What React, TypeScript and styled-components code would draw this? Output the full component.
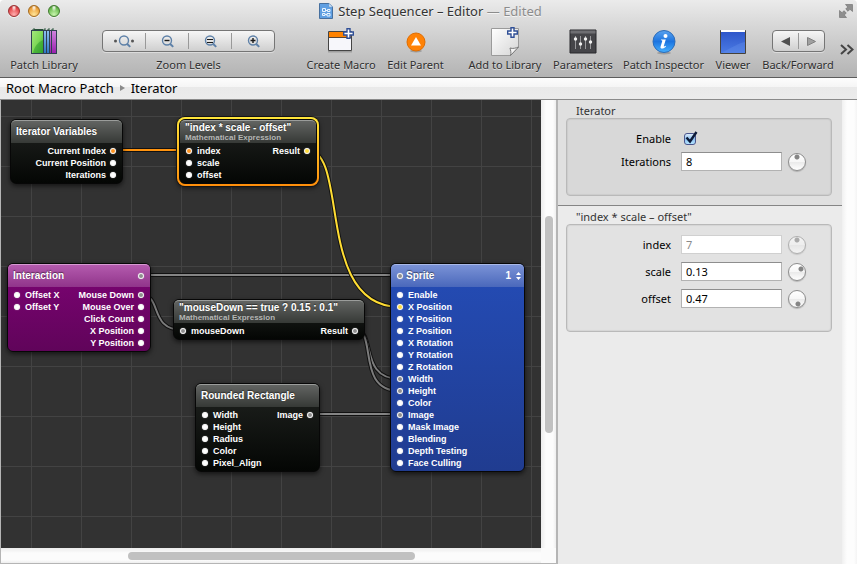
import React, { useId } from "react";
import styled, { createGlobalStyle, css } from "styled-components";

const ui = `"Noto Sans", "Open Sans", sans-serif`;
const patchFont = `"Liberation Sans", Arial, sans-serif`;

const GlobalStyle = createGlobalStyle`
  *, *::before, *::after { box-sizing: border-box; }
  body { margin: 0; background: #fff; font-family: ${ui}; color: #000; }
  button, input { font: inherit; color: inherit; margin: 0; padding: 0; }
`;

/* ---------- window chrome ---------- */

const Window = styled.div`
  display: flex;
  flex-direction: column;
  min-height: 100vh;
`;

const Chrome = styled.header`
  display: flex;
  flex-direction: column;
  background: linear-gradient(#ebebeb 0, #dadada 22px, #b3b3b3 100%);
  border-bottom: 1px solid #5c5c5c;
  border-radius: 4px 4px 0 0;
`;

const TitleBar = styled.div`
  display: grid;
  grid-template-columns: 1fr auto 1fr;
  align-items: center;
  height: 22px;
  padding: 0 4px 0 8px;
`;

const Lights = styled.div`
  display: flex;
  gap: 8px;
`;

const Light = styled.button<{ $dark: string; $mid: string; $pale: string }>`
  width: 12px;
  height: 12px;
  border: 1px solid ${(p) => p.$dark};
  border-radius: 50%;
  background: radial-gradient(ellipse at 50% 15%, #fff 0, transparent 35%),
    radial-gradient(circle at 50% 85%, ${(p) => p.$pale} 0, ${(p) => p.$mid} 65%, ${(p) => p.$dark} 100%);
  box-shadow: 0 1px 0 #f2f2f2;
`;

const Title = styled.h1`
  display: flex;
  align-items: center;
  gap: 5px;
  margin: 0;
  font-size: 13px;
  line-height: 20px;
  font-weight: 400;
  white-space: pre;
  color: #333;
  text-shadow: 0 1px 0 #f4f4f4;
`;

const Faded = styled.span`
  color: #8c8c8c;
`;

const PlainButton = styled.button`
  display: flex;
  border: 0;
  background: none;
`;

const CornerButton = styled(PlainButton)`
  justify-self: end;
`;

const Toolbar = styled.div`
  display: flex;
  gap: 9px;
  height: 55px;
  padding: 0 3px 0 9px;
`;

const ToolItem = styled.div<{ $width: number }>`
  display: flex;
  flex-direction: column;
  align-items: center;
  flex: none;
  width: ${(p) => p.$width}px;
`;

const ToolButton = styled.button<{ $width: number }>`
  display: flex;
  flex-direction: column;
  align-items: center;
  flex: none;
  width: ${(p) => p.$width}px;
  border: 0;
  background: none;
`;

const ToolPicture = styled.span`
  display: flex;
  align-items: center;
  justify-content: center;
  height: 35px;
  padding-top: 5px;
`;

const ToolLabel = styled.span`
  font-size: 11px;
  line-height: 16px;
  white-space: nowrap;
  color: #2e2e2e;
  text-shadow: 0 1px 0 #dedede;
`;

const Space = styled.span<{ $size: number }>`
  flex: none;
  width: ${(p) => p.$size}px;
  margin-right: -9px;
`;

const Segments = styled.div<{ $width: number }>`
  display: flex;
  align-items: center;
  width: ${(p) => p.$width}px;
  height: 22px;
  margin: 8px 0 5px;
  border: 1px solid #757575;
  border-radius: 4px;
  background: linear-gradient(#f6f6f6, #cfcfcf);
  box-shadow: 0 1px 0 #dcdcdc;
`;

const Segment = styled.button`
  display: flex;
  flex: 1;
  align-items: center;
  justify-content: center;
  height: 16px;
  border: 0;
  background: none;
  & + & { border-left: 1px solid #999; }
`;

const More = styled(PlainButton)`
  flex: 1;
  align-self: flex-start;
  justify-content: flex-end;
  margin: 22px 0 0 -5px;
`;

const Crumbs = styled.nav`
  display: flex;
  align-items: center;
  gap: 6px;
  height: 22px;
  padding: 0 6px 2px;
  background: linear-gradient(#fdfdfd 0, #f5f5f5 9px, #e9e9e9 9px, #ebebeb 100%);
  border-bottom: 1px solid #8a8a8a;
  font-size: 13px;
  line-height: 18px;
`;

const Crumb = styled.a`
  color: #000;
  text-decoration: none;
`;

/* ---------- work area ---------- */

const WorkArea = styled.main`
  display: flex;
  flex: 1;
`;

const Editor = styled.section`
  display: grid;
  grid-template: 1fr 15px / 1fr 15px;
  flex: 1;
  border: solid #b5b5b5;
  border-width: 0 2px 1px 1px;
  background: #fbfbfb;
`;

const Canvas = styled.div`
  position: relative;
  isolation: isolate;
  overflow: hidden;
  min-height: 400px;
  background: linear-gradient(90deg, #434343 1px, transparent 1px) 30px 0 / 50px 50px,
    linear-gradient(#434343 1px, transparent 1px) 0 16px / 50px 50px, #323232;
`;

const Wires = styled.svg`
  position: absolute;
  z-index: -2;
  left: 0;
  top: 0;
  width: 100%;
  height: 100%;
`;

const VTrack = styled.div`
  display: grid;
  grid-template-rows: 116fr 217fr 115fr;
  padding: 0 3px 0 4px;
  background: linear-gradient(90deg, #ececec, #fcfcfc 5px, #fcfcfc 12px, #eee);
`;

const HTrack = styled.div`
  display: grid;
  grid-template-columns: 127fr 287fr 126fr;
  padding: 4px 0 3px;
  background: linear-gradient(#ececec, #fcfcfc 5px, #fcfcfc 12px, #eee);
`;

const VThumb = styled.span`
  grid-row: 2;
  border-radius: 4px;
  background: #c1c1c1;
`;

const HThumb = styled.span`
  grid-column: 2;
  border-radius: 4px;
  background: #c1c1c1;
`;

/* ---------- patches ---------- */

type Tone = "black" | "purple" | "blue";

const tones: Record<Tone, { edge: string; head: string; body: string }> = {
  black: {
    edge: "#9b9d9b",
    head: "linear-gradient(#626462, #363936)",
    body: "linear-gradient(#202320, #040604)",
  },
  purple: {
    edge: "#d79ad2",
    head: "linear-gradient(#b45bae, #90348a)",
    body: "linear-gradient(#7d0374, #60045a)",
  },
  blue: {
    edge: "#a9b9e8",
    head: "linear-gradient(#7a92d6, #4a68bb)",
    body: "linear-gradient(#244cb6, #203c90)",
  },
};

const PatchBox = styled.article<{ $x: number; $y: number; $w: number; $tone: Tone; $selected?: boolean }>`
  position: absolute;
  left: ${(p) => p.$x}px;
  top: ${(p) => p.$y}px;
  width: ${(p) => p.$w}px;
  border: 1px solid #070707;
  border-radius: 6px;
  background: ${(p) => tones[p.$tone].body};
  box-shadow: 0 2px 5px rgba(0, 0, 0, 0.6);
  color: #fff;
  font-family: ${patchFont};
  font-weight: 700;
  ${(p) =>
    p.$selected &&
    css`
      box-shadow: none;
      &::before {
        content: "";
        position: absolute;
        z-index: -1;
        inset: -3px;
        border-radius: 8px;
        background: linear-gradient(#ffe63a, #ff8e0a);
        box-shadow: 0 0 0 1px #151515, 0 2px 5px rgba(0, 0, 0, 0.6);
      }
    `}
`;

const PatchHead = styled.header<{ $tone: Tone; $port?: boolean }>`
  display: flex;
  align-items: center;
  gap: 3px;
  height: 23px;
  padding: 0 6px 0 ${(p) => (p.$port ? 6 : 5)}px;
  border-top: 1px solid ${(p) => tones[p.$tone].edge};
  border-radius: 5px 5px 0 0;
  background: ${(p) => tones[p.$tone].head};
`;

const PatchNames = styled.div`
  display: flex;
  flex: 1;
  flex-direction: column;
  white-space: nowrap;
`;

const PatchName = styled.h2`
  margin: 0;
  font-size: 10px;
  line-height: 10px;
  text-shadow: 0 -1px 1px rgba(0, 0, 0, 0.5);
`;

const PatchKind = styled.span`
  font-size: 8px;
  line-height: 9px;
  color: #b4b6b4;
`;

const LayerButton = styled.button`
  display: flex;
  align-items: center;
  gap: 5px;
  margin-right: -3px;
  border: 0;
  background: none;
  font-size: 10px;
  line-height: 10px;
`;

const PatchBody = styled.div`
  display: flex;
  justify-content: space-between;
  padding: 2px 6px;
`;

const PortList = styled.ul`
  margin: 0;
  padding: 0;
  list-style: none;
`;

const PortRow = styled.li<{ $out?: boolean }>`
  display: flex;
  flex-direction: ${(p) => (p.$out ? "row-reverse" : "row")};
  align-items: center;
  gap: ${(p) => (p.$out ? 4 : 5)}px;
  font-size: 9px;
  line-height: 12px;
  white-space: nowrap;
`;

const Dot = styled.span<{ $fill?: string }>`
  flex: none;
  width: 6px;
  height: 6px;
  border: 1px solid #f6f6f6;
  border-radius: 50%;
  background: ${(p) => p.$fill ?? "#fff"};
  box-shadow: 0 0 1px rgba(255, 255, 255, 0.8);
`;

const ORANGE = "#ff9420";
const YELLOW = "#ffdc3c";
const GREY = "#8e8e8e";

type Port = string | [string, string];

interface PatchProps {
  x: number;
  y: number;
  w: number;
  tone?: Tone;
  name: string;
  kind?: string;
  inputs?: Port[];
  outputs?: Port[];
  headIn?: boolean;
  headOut?: boolean;
  layer?: string;
  selected?: boolean;
}

function Ports({ ports, out }: { ports: Port[]; out?: boolean }) {
  return (
    <PortList>
      {ports.map((port) => {
        const [label, fill] = typeof port === "string" ? [port, undefined] : port;
        return (
          <PortRow key={label} $out={out}>
            <Dot $fill={fill} />
            <span>{label}</span>
          </PortRow>
        );
      })}
    </PortList>
  );
}

function Patch({ x, y, w, tone = "black", name, kind, inputs = [], outputs = [], headIn, headOut, layer, selected }: PatchProps) {
  return (
    <PatchBox $x={x} $y={y} $w={w} $tone={tone} $selected={selected}>
      <PatchHead $tone={tone} $port={headIn}>
        {headIn && <Dot $fill={GREY} />}
        <PatchNames>
          <PatchName>{name}</PatchName>
          {kind && <PatchKind>{kind}</PatchKind>}
        </PatchNames>
        {headOut && <Dot $fill={GREY} />}
        {layer && (
          <LayerButton>
            {layer}
            <svg width="5" height="8" viewBox="0 0 5 8" fill="#fff" aria-hidden="true">
              <path d="M2.5 0L5 3H0zM2.5 8L5 5H0z" />
            </svg>
          </LayerButton>
        )}
      </PatchHead>
      <PatchBody>
        <Ports ports={inputs} />
        <Ports ports={outputs} out />
      </PatchBody>
    </PatchBox>
  );
}

const wires = [
  { d: "M140 175H399", color: "#858585" },
  { d: "M309 314H399", color: "#858585" },
  { d: "M140 195C162 195 147 230 182 230", color: "#7c7c7c" },
  { d: "M354 230C376 230 357 279 399 279", color: "#7c7c7c" },
  { d: "M354 230C377 230 354 291 399 291", color: "#7c7c7c" },
  { d: "M112 50H188", color: "#ff930f" },
  { d: "M306 50C349 50 313 207 399 207", color: "#ffdd33" },
];

/* ---------- inspector ---------- */

const Inspector = styled.aside`
  display: flex;
  flex: none;
  width: 299px;
`;

const Panels = styled.div`
  display: flex;
  flex: 1;
  flex-direction: column;
  background: #ebebeb;
`;

const Gutter = styled.div`
  width: 15px;
  background: linear-gradient(90deg, #f0f0f0, #fdfdfd 5px, #fdfdfd 12px, #f4f4f4);
`;

const Panel = styled.section<{ $active?: boolean }>`
  padding: 3px 10px 9px 8px;
  ${(p) =>
    p.$active &&
    css`
      background: #e0e0e0;
      border-bottom: 1px solid #858585;
    `}
`;

const PanelTitle = styled.h2`
  margin: 0 10px;
  font-size: 11px;
  line-height: 15px;
  font-weight: 400;
  color: #333;
`;

const Fields = styled.div<{ $gap: number; $fill: string; $bottom: number }>`
  display: flex;
  flex-direction: column;
  gap: ${(p) => p.$gap}px;
  padding: 10px 25px ${(p) => p.$bottom}px 9px;
  border: 1px solid #b9b9b9;
  border-radius: 4px;
  background: ${(p) => p.$fill};
  box-shadow: inset 0 0 1px 1px rgba(0, 0, 0, 0.06);
`;

const Field = styled.div`
  display: grid;
  grid-template-columns: 1fr 101px 18px;
  align-items: center;
  column-gap: 6px;
  height: 19px;
`;

const FieldLabel = styled.label`
  margin-right: 4px;
  text-align: right;
  font-size: 11px;
  line-height: 19px;
`;

const TextBox = styled.input`
  width: 100%;
  height: 19px;
  padding: 0 4px;
  border: 1px solid #b2b2b2;
  border-top-color: #8e8e8e;
  border-radius: 0;
  background: #fff;
  font-size: 11px;
  &:disabled {
    border-color: #d0d0d0;
    color: #8a8a8a;
    background: #fff;
  }
`;

const Knob = styled.input<{ $dx: number; $dy: number }>`
  appearance: none;
  width: 18px;
  height: 18px;
  border: 1px solid #8d8d8d;
  border-radius: 50%;
  background: radial-gradient(circle at ${(p) => p.$dx}px ${(p) => p.$dy}px, #858585 2px, transparent 3px),
    linear-gradient(#fff 0, #f6f6f6 50%, #e9e9e9 50%, #fff 100%);
  box-shadow: 0 1px 1px rgba(0, 0, 0, 0.2);
  &::-webkit-slider-thumb { appearance: none; width: 0; height: 0; }
  &:disabled { opacity: 0.6; }
`;

const TickWrap = styled.span`
  position: relative;
  display: flex;
  padding-left: 3px;
`;

const TickBox = styled.input`
  appearance: none;
  width: 12px;
  height: 12px;
  border: 1px solid #4a568e;
  border-radius: 3px;
  background: linear-gradient(#dcebfa, #8dc0ef 50%, #b4e4ff);
`;

const Tick = styled.svg`
  position: absolute;
  left: 4px;
  top: -2px;
  pointer-events: none;
  display: none;
  ${TickBox}:checked + & { display: block; }
`;

interface NumberFieldProps {
  label: string;
  value: string;
  dx: number;
  dy: number;
  disabled?: boolean;
}

function NumberField({ label, value, dx, dy, disabled }: NumberFieldProps) {
  const id = useId();
  return (
    <Field>
      <FieldLabel htmlFor={id}>{label}</FieldLabel>
      <TextBox id={id} type="text" defaultValue={value} disabled={disabled} />
      <Knob type="range" min="0" max="10" step="0.01" defaultValue={value} aria-label={`${label} dial`} disabled={disabled} $dx={dx} $dy={dy} />
    </Field>
  );
}

/* ---------- icons ---------- */

function DocumentIcon() {
  return (
    <svg width="14" height="16" viewBox="0 0 14 16" aria-hidden="true">
      <path d="M.5.5H10L13.5 4v11.5H.5z" fill="#5f9fe2" stroke="#47709f" />
      <path d="M10 .5V4h3.5z" fill="#e4f1ff" stroke="#6f9ccb" strokeWidth=".6" />
      <g fill="none" stroke="#e8f4ff">
        <path d="M3.500 5.500h3v3h-3zM8.500 6.500h2.500v2h-2.500zM3.500 10.500h2.500v2h-2.500zM8 10.500h3v2.500H8zM6.500 7.500h2M6 11.500h2" />
      </g>
    </svg>
  );
}

function LibraryIcon() {
  return (
    <svg width="28" height="28" viewBox="0 1 28 28" aria-hidden="true">
      <defs>
        <linearGradient id="lib-g" x2="1" y2="1"><stop stopColor="#a4e57c" /><stop offset=".5" stopColor="#7ed957" /><stop offset="1" stopColor="#35a82b" /></linearGradient>
        <linearGradient id="lib-b" x2="0" y2="1"><stop stopColor="#8cc0f0" /><stop offset="1" stopColor="#2d76c4" /></linearGradient>
        <linearGradient id="lib-p" x2="0" y2="1"><stop stopColor="#cf83dd" /><stop offset="1" stopColor="#9a1fae" /></linearGradient>
      </defs>
      <path d="M2 3.500l2-2v2M13 3.500l2-2v2M17 3.500l2-2v2M21 3.500l2-2v2M4 2.500h9" stroke="#275038" fill="none" />
      <path d="M1 3h26v24H1z" fill="#2f4050" />
      <path d="M2 4h11v22H2z" fill="url(#lib-g)" />
      <path d="M13 13v13H3c1-6 5-11 10-13z" fill="#2f9f2b" opacity=".55" />
      <path d="M14 4h2v22h-2zM17 4h2v22h-2z" fill="url(#lib-b)" />
      <path d="M20 4h1v22h-1zM22 4h4v22h-4z" fill="url(#lib-p)" />
    </svg>
  );
}

type Sign = "fit" | "minus" | "equal" | "plus";

const signs: Record<Sign, string> = {
  fit: "",
  minus: "M7.500 5.500h5",
  equal: "M7 4.500h6M7 7.500h6",
  plus: "M7.500 5.500h5M10 3v5",
};

function Magnifier({ sign }: { sign: Sign }) {
  return (
    <svg width="20" height="13" viewBox="0 0 20 13" fill="none" aria-hidden="true">
      <circle cx="10" cy="5.500" r="4.500" stroke="#5e81a8" strokeWidth="1.400" />
      <path d="M13 8.700l3.200 3.200" stroke="#5e81a8" strokeWidth="2" />
      <path d={signs[sign]} stroke="#1a1a1a" strokeWidth={sign === "equal" ? 1 : 1.4} />
      {sign === "fit" && <path d="M1.500 4.500a1.500 1.500 0 1 1 0 3a1.500 1.500 0 1 1 0-3M18.500 4.500a1.500 1.500 0 1 1 0 3a1.500 1.500 0 1 1 0-3" fill="#555" />}
    </svg>
  );
}

const plusPath = "M4 .7h3v3.300h3.300v3H7v3.300H4V7H.7V4H4z";

function MacroIcon() {
  return (
    <svg width="28" height="28" viewBox="0 3 28 28" aria-hidden="true">
      <path d="M1 26h24v1.500H1z" fill="#777" opacity=".5" />
      <path d="M1.500 6.500h23v19h-23z" fill="#f7f7fb" stroke="#444" />
      <path d="M2 7h22v5H2z" fill="#ff8200" />
      <path d="M2 12.500h22" stroke="#5b4633" />
      <g transform="translate(16 3)"><path d={plusPath} fill="#fff" stroke="#2f4f96" strokeWidth="1.400" /></g>
    </svg>
  );
}

function ParentIcon() {
  return (
    <svg width="22" height="22" viewBox="0 0 22 22" aria-hidden="true">
      <ellipse cx="11" cy="20" rx="6" ry="1.500" fill="#777" opacity=".5" />
      <circle cx="11" cy="11" r="9" fill="#ff8206" stroke="#e06d00" />
      <path d="M11 6l5 8.500H6z" fill="#fff" />
    </svg>
  );
}

function PageIcon() {
  return (
    <svg width="30" height="30" viewBox="0 0 30 30" aria-hidden="true">
      <defs><linearGradient id="page" x2="1" y2="1"><stop stopColor="#fff" /><stop offset="1" stopColor="#d5d5d5" /></linearGradient></defs>
      <path d="M1.500 1.500h27V20l-8 8.500h-19z" fill="url(#page)" stroke="#9a9a9a" />
      <path d="M20.500 28.500c1-3 0-5-.5-7.500c3 1 6 0 8.500-1z" fill="#f4f4f4" stroke="#777" />
      <g transform="translate(17 0)"><path d={plusPath} fill="#fff" stroke="#2f4f96" strokeWidth="1.400" /></g>
    </svg>
  );
}

function SlidersIcon() {
  return (
    <svg width="28" height="26" viewBox="0 0 28 26" aria-hidden="true">
      <path d="M1 1h26v23H1z" fill="#454549" stroke="#29292c" />
      <path d="M1.500 1.500h25v3h-25z" fill="#6e6e72" />
      <path d="M6.500 7v13M11.500 7v13M16.500 7v13M21.500 7v13" stroke="#99999c" />
      <g fill="#f2f2f2"><circle cx="6.500" cy="10" r="1.700" /><circle cx="11.500" cy="15" r="1.700" /><circle cx="16.500" cy="10" r="1.700" /><circle cx="21.500" cy="13" r="1.700" /></g>
    </svg>
  );
}

function InfoIcon() {
  return (
    <svg width="26" height="26" viewBox="0 0 26 26" aria-hidden="true">
      <defs><linearGradient id="info" x2="0" y2="1"><stop stopColor="#5aa2ee" /><stop offset=".5" stopColor="#1c74e0" /><stop offset="1" stopColor="#45b0ff" /></linearGradient></defs>
      <ellipse cx="13" cy="24" rx="7" ry="1.500" fill="#777" opacity=".5" />
      <circle cx="13" cy="12.500" r="11" fill="url(#info)" stroke="#2d6cb8" />
      <circle cx="14.500" cy="7" r="2" fill="#fff" />
      <path d="M10 10.500h4.800l-2 6.500c-.2.900.6.700 1.800-.2l.4.700c-1.500 1.500-2.600 2.100-3.900 2.100c-1.400 0-1.900-.9-1.500-2.200l1.600-5.200c.2-.7-.2-.9-1.300-.9z" fill="#fff" />
    </svg>
  );
}

function ViewerIcon() {
  return (
    <svg width="28" height="26" viewBox="0 0 28 26" aria-hidden="true">
      <defs><linearGradient id="viewer" x2="0" y2="1"><stop stopColor="#2c54c8" /><stop offset="1" stopColor="#4b7be4" /></linearGradient></defs>
      <path d="M1.500 1.500h25v23h-25z" fill="url(#viewer)" stroke="#46423a" />
      <path d="M2 1h24v2H2z" fill="#fff" />
      <path d="M2 24C10 20 20 14 26 13V24z" fill="#6c98f0" opacity=".3" />
    </svg>
  );
}

function FullScreenIcon() {
  return (
    <svg width="14" height="14" viewBox="0 0 14 14" fill="#8e8e8e" stroke="#6b6b6b" strokeWidth=".6" aria-hidden="true">
      <path d="M6.500.5h7v7L11 5.300 9 7.300 6.700 5 8.700 3z" />
      <path d="M7.500 13.500h-7v-7L3 8.700l2-2L7.300 9l-2 2z" />
    </svg>
  );
}

/* ---------- page ---------- */

const actions = [
  { label: "Parameters", width: 60, icon: <SlidersIcon /> },
  { label: "Patch Inspector", width: 83, icon: <InfoIcon /> },
  { label: "Viewer", width: 38, icon: <ViewerIcon /> },
];

function Action({ label, width, icon }: { label: string; width: number; icon: React.ReactNode }) {
  return (
    <ToolButton $width={width}>
      <ToolPicture>{icon}</ToolPicture>
      <ToolLabel>{label}</ToolLabel>
    </ToolButton>
  );
}

export default function App() {
  return (
    <Window>
      <GlobalStyle />
      <Chrome>
        <TitleBar>
          <Lights>
            <Light aria-label="Close" $dark="#9c2f31" $mid="#e5484b" $pale="#ffb0b0" />
            <Light aria-label="Minimize" $dark="#a4691c" $mid="#eda33c" $pale="#ffe69a" />
            <Light aria-label="Zoom" $dark="#3f7a2d" $mid="#6ebe52" $pale="#c9f5ae" />
          </Lights>
          <Title>
            <DocumentIcon />
            <span>Step Sequencer – Editor <Faded>— Edited</Faded></span>
          </Title>
          <CornerButton aria-label="Full screen"><FullScreenIcon /></CornerButton>
        </TitleBar>
        <Toolbar>
          <Action label="Patch Library" width={70} icon={<LibraryIcon />} />
          <Space $size={14} />
          <ToolItem $width={173}>
            <Segments $width={173}>
              <Segment aria-label="Zoom to fit"><Magnifier sign="fit" /></Segment>
              <Segment aria-label="Zoom out"><Magnifier sign="minus" /></Segment>
              <Segment aria-label="Actual size"><Magnifier sign="equal" /></Segment>
              <Segment aria-label="Zoom in"><Magnifier sign="plus" /></Segment>
            </Segments>
            <ToolLabel>Zoom Levels</ToolLabel>
          </ToolItem>
          <Space $size={21} />
          <Action label="Create Macro" width={72} icon={<MacroIcon />} />
          <Action label="Edit Parent" width={59} icon={<ParentIcon />} />
          <Space $size={12} />
          <Action label="Add to Library" width={78} icon={<PageIcon />} />
          {actions.map((a) => <Action key={a.label} {...a} />)}
          <ToolItem $width={74}>
            <Segments $width={53}>
              <Segment aria-label="Back">
                <svg width="9" height="9" viewBox="0 0 9 9"><path d="M9 0v9L0 4.500z" fill="#505050" /></svg>
              </Segment>
              <Segment aria-label="Forward">
                <svg width="9" height="9" viewBox="0 0 9 9"><path d="M.5.5v8L8.500 4.500z" fill="#a0a0a0" stroke="#808080" /></svg>
              </Segment>
            </Segments>
            <ToolLabel>Back/Forward</ToolLabel>
          </ToolItem>
          <More aria-label="More tools">
            <svg width="14" height="11" viewBox="0 0 14 11" fill="none" stroke="#454545" strokeWidth="2">
              <path d="M1 1l5 4.500L1 10M7.500 1l5 4.500-5 4.500" />
            </svg>
          </More>
        </Toolbar>
      </Chrome>
      <Crumbs aria-label="Patch path">
        <Crumb href="#root">Root Macro Patch</Crumb>
        <svg width="5" height="6" viewBox="0 0 5 6" fill="#8a8a8a" aria-hidden="true"><path d="M0 0l5 3-5 3z" /></svg>
        <Crumb href="#iterator">Iterator</Crumb>
      </Crumbs>
      <WorkArea>
        <Editor>
          <Canvas>
            <Wires aria-hidden="true">
              {wires.map((w) => (
                <g key={w.d} fill="none">
                  <path d={w.d} stroke="#111" strokeWidth="4" />
                  <path d={w.d} stroke={w.color} strokeWidth="2" />
                </g>
              ))}
            </Wires>
            <Patch x={9} y={19} w={113} name="Iterator Variables" outputs={[["Current Index", ORANGE], "Current Position", "Iterations"]} />
            <Patch
              x={178} y={19} w={138} selected
              name={'"index * scale - offset"'} kind="Mathematical Expression"
              inputs={[["index", ORANGE], "scale", "offset"]} outputs={[["Result", YELLOW]]}
            />
            <Patch
              x={6} y={163} w={144} tone="purple" name="Interaction" headOut
              inputs={["Offset X", "Offset Y"]}
              outputs={[["Mouse Down", GREY], "Mouse Over", "Click Count", "X Position", "Y Position"]}
            />
            <Patch
              x={172} y={199} w={192}
              name={'"mouseDown == true ? 0.15 : 0.1"'} kind="Mathematical Expression"
              inputs={[["mouseDown", GREY]]} outputs={[["Result", GREY]]}
            />
            <Patch
              x={194} y={283} w={125} name="Rounded Rectangle"
              inputs={["Width", "Height", "Radius", "Color", "Pixel_Align"]} outputs={[["Image", GREY]]}
            />
            <Patch
              x={389} y={163} w={135} tone="blue" name="Sprite" headIn layer="1"
              inputs={[
                "Enable", ["X Position", YELLOW], "Y Position", "Z Position", "X Rotation", "Y Rotation", "Z Rotation",
                ["Width", GREY], ["Height", GREY], "Color", ["Image", GREY], "Mask Image", "Blending", "Depth Testing", "Face Culling",
              ]}
            />
          </Canvas>
          <VTrack><VThumb /></VTrack>
          <HTrack><HThumb /></HTrack>
        </Editor>
        <Inspector>
          <Panels>
            <Panel $active>
              <PanelTitle>Iterator</PanelTitle>
              <Fields $gap={4} $fill="#d8d8d8" $bottom={24}>
                <Field>
                  <FieldLabel htmlFor="enable">Enable</FieldLabel>
                  <TickWrap>
                    <TickBox id="enable" type="checkbox" defaultChecked />
                    <Tick width="14" height="13" viewBox="0 0 14 13" fill="none" aria-hidden="true">
                      <path d="M1.500 6.500l3.500 4L11.500 1" stroke="#0c1a38" strokeWidth="2.400" />
                    </Tick>
                  </TickWrap>
                </Field>
                <NumberField label="Iterations" value="8" dx={8} dy={3} />
              </Fields>
            </Panel>
            <Panel>
              <PanelTitle>{'"index * scale – offset"'}</PanelTitle>
              <Fields $gap={8} $fill="#e2e2e2" $bottom={23}>
                <NumberField label="index" value="7" dx={8} dy={3} disabled />
                <NumberField label="scale" value="0.13" dx={12} dy={5} />
                <NumberField label="offset" value="0.47" dx={9} dy={13} />
              </Fields>
            </Panel>
          </Panels>
          <Gutter />
        </Inspector>
      </WorkArea>
    </Window>
  );
}
